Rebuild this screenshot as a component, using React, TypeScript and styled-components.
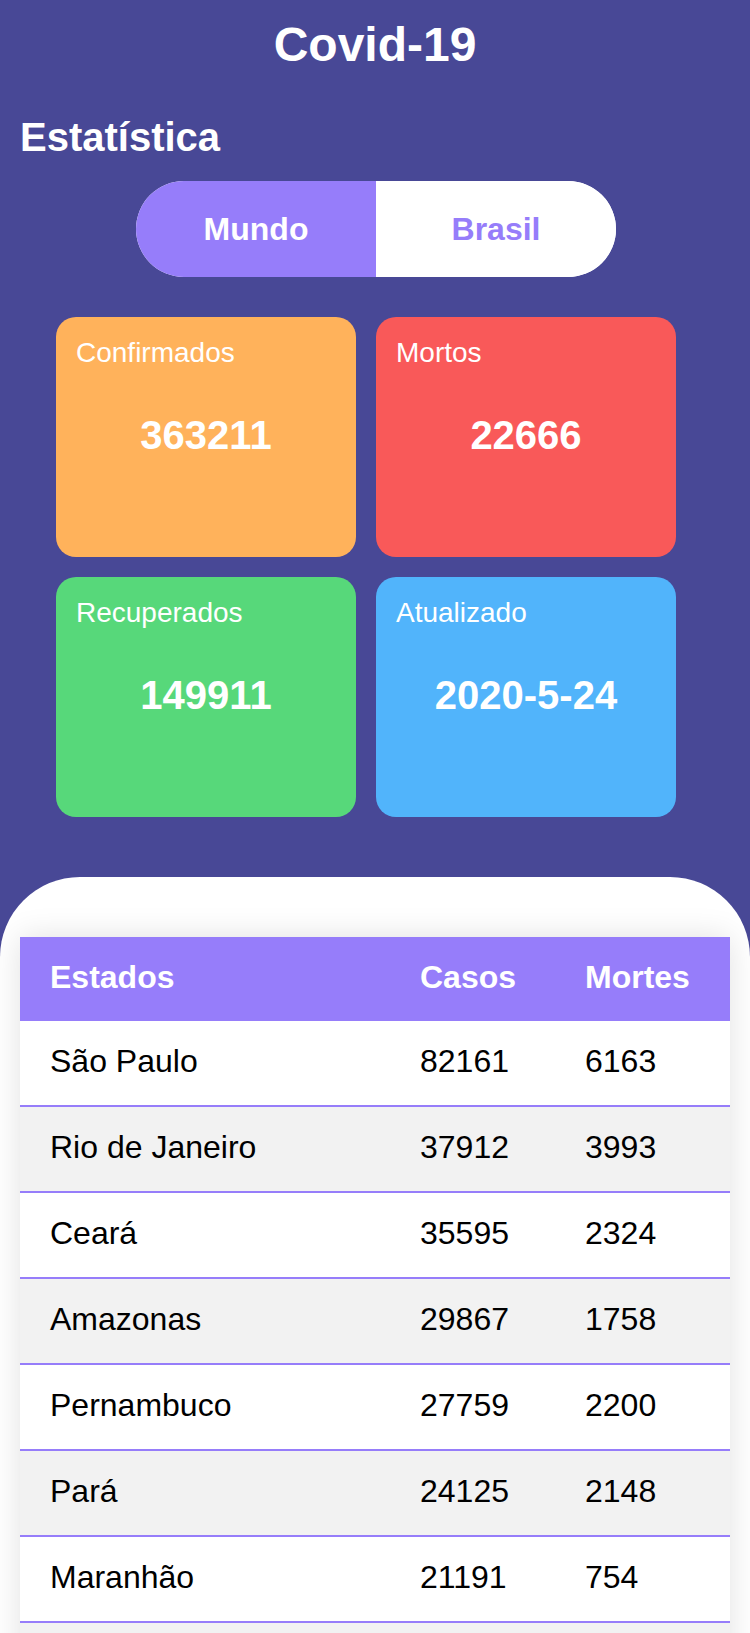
import React, { useState } from "react";
import styled, { createGlobalStyle } from "styled-components";

const GlobalStyle = createGlobalStyle`
  * {
    box-sizing: border-box;
  }
  body {
    margin: 0;
    background-color: #484896;
    font-family: "Liberation Sans", Arial, sans-serif;
    color: #fff;
  }
`;

const Page = styled.div`
  width: 750px;
  display: flex;
  flex-direction: column;
`;

const Title = styled.h1`
  margin: 0;
  padding-top: 17px;
  font-size: 48px;
  line-height: 56px;
  font-weight: 700;
  text-align: center;
`;

const Subtitle = styled.h2`
  margin: 41px 0 0 20px;
  font-size: 40px;
  line-height: 46px;
  font-weight: 700;
`;

const Toggle = styled.div`
  align-self: center;
  margin: 21px 0 0 2px;
  width: 480px;
  height: 96px;
  border-radius: 48px;
  overflow: hidden;
  display: flex;
  background-color: #fff;
`;

const ToggleButton = styled.button<{ $active: boolean }>`
  flex: 1;
  border: none;
  margin: 0;
  padding: 0;
  cursor: pointer;
  font-family: inherit;
  font-size: 32px;
  font-weight: 700;
  background-color: ${(p) => (p.$active ? "#967dfa" : "#fff")};
  color: ${(p) => (p.$active ? "#fff" : "#967dfa")};
`;

const Cards = styled.div`
  margin: 40px 0 0 56px;
  display: grid;
  grid-template-columns: 300px 300px;
  grid-auto-rows: 240px;
  gap: 20px;
`;

const Card = styled.div<{ $color: string }>`
  background-color: ${(p) => p.$color};
  border-radius: 20px;
  padding: 20px;
  display: flex;
  flex-direction: column;
`;

const CardLabel = styled.span`
  font-size: 28px;
  line-height: 32px;
`;

const CardValue = styled.strong`
  margin-top: 43px;
  font-size: 40px;
  line-height: 46px;
  font-weight: 700;
  text-align: center;
`;

const Panel = styled.section`
  margin-top: 60px;
  background-color: #fff;
  border-radius: 80px 80px 0 0;
  padding: 60px 20px 40px;
`;

const Table = styled.table`
  width: 710px;
  border-collapse: separate;
  border-spacing: 0;
  table-layout: fixed;
  box-shadow: 0 0 30px rgba(0, 0, 0, 0.12);
  color: #000;
`;

const Th = styled.th<{ $width?: number }>`
  width: ${(p) => (p.$width ? `${p.$width}px` : "auto")};
  background-color: #967dfa;
  color: #fff;
  text-align: left;
  font-size: 32px;
  font-weight: 700;
  line-height: 38px;
  padding: 21px 30px 25px;
`;

const Tr = styled.tr`
  &:nth-child(odd) {
    background-color: #fff;
  }
  &:nth-child(even) {
    background-color: #f2f2f2;
  }
`;

const Td = styled.td`
  font-size: 32px;
  line-height: 38px;
  padding: 21px 30px 25px;
  border-bottom: 2px solid #967dfa;
`;

const cards = [
  { label: "Confirmados", value: "363211", color: "#ffb25b" },
  { label: "Mortos", value: "22666", color: "#f95959" },
  { label: "Recuperados", value: "149911", color: "#57d87a" },
  { label: "Atualizado", value: "2020-5-24", color: "#51b4fb" },
];

const states = [
  ["São Paulo", 82161, 6163],
  ["Rio de Janeiro", 37912, 3993],
  ["Ceará", 35595, 2324],
  ["Amazonas", 29867, 1758],
  ["Pernambuco", 27759, 2200],
  ["Pará", 24125, 2148],
  ["Maranhão", 21191, 754],
  ["Bahia", 12868, 455],
  ["Espírito Santo", 9426, 386],
];

function App() {
  const [scope, setScope] = useState<"mundo" | "brasil">("mundo");

  return (
    <>
      <GlobalStyle />
      <Page>
        <Title>Covid-19</Title>
        <Subtitle>Estatística</Subtitle>
        <Toggle>
          <ToggleButton $active={scope === "mundo"} onClick={() => setScope("mundo")}>
            Mundo
          </ToggleButton>
          <ToggleButton $active={scope === "brasil"} onClick={() => setScope("brasil")}>
            Brasil
          </ToggleButton>
        </Toggle>
        <Cards>
          {cards.map((c) => (
            <Card key={c.label} $color={c.color}>
              <CardLabel>{c.label}</CardLabel>
              <CardValue>{c.value}</CardValue>
            </Card>
          ))}
        </Cards>
        <Panel>
          <Table>
            <thead>
              <tr>
                <Th $width={370}>Estados</Th>
                <Th $width={165}>Casos</Th>
                <Th>Mortes</Th>
              </tr>
            </thead>
            <tbody>
              {states.map(([name, cases, deaths]) => (
                <Tr key={name}>
                  <Td>{name}</Td>
                  <Td>{cases}</Td>
                  <Td>{deaths}</Td>
                </Tr>
              ))}
            </tbody>
          </Table>
        </Panel>
      </Page>
    </>
  );
}

export default App;
